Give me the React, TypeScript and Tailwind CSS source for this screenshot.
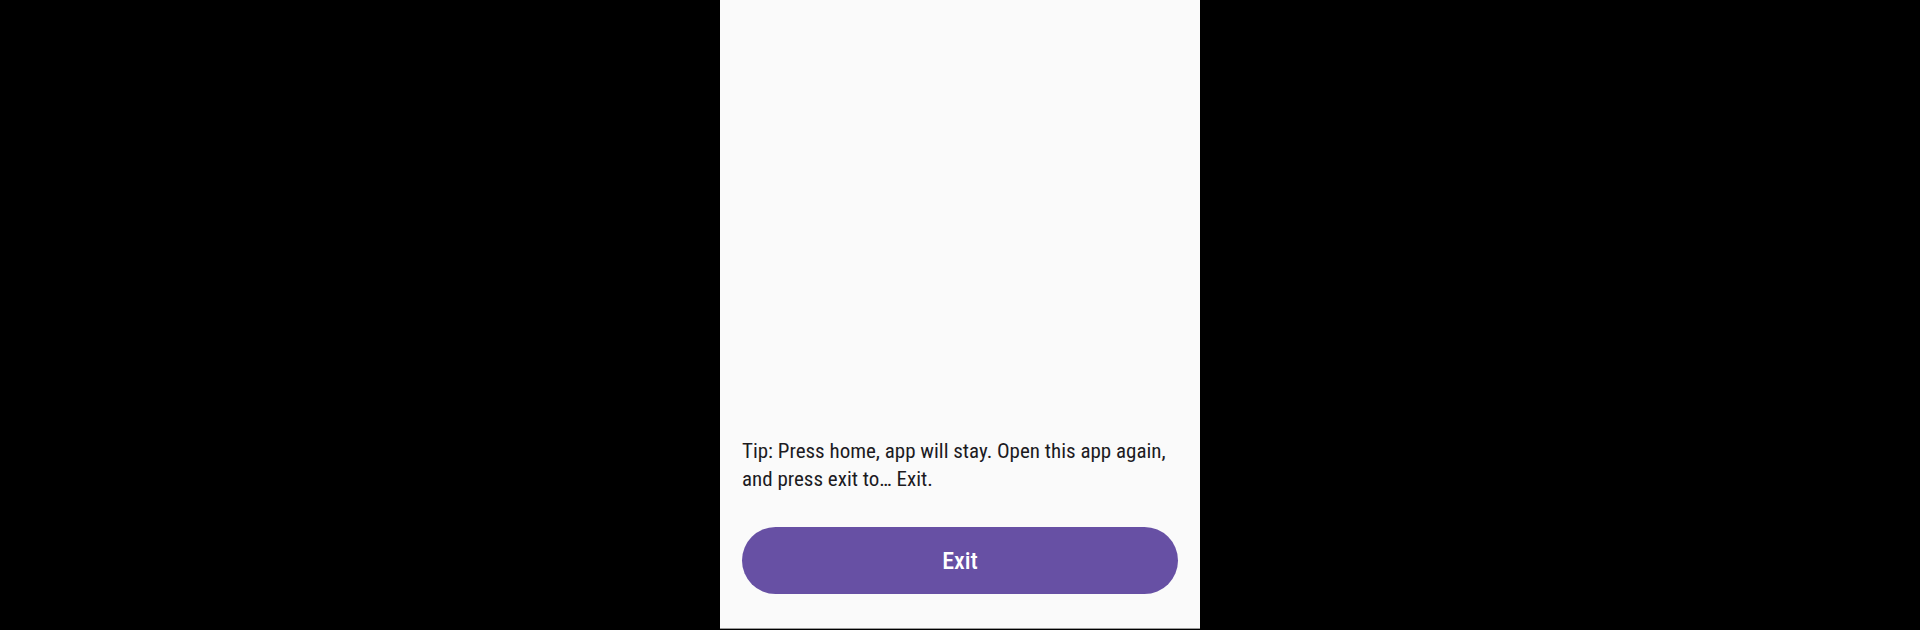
import React from "react";

export default function App() {
  return (
    <div className="w-[1920px] h-[630px] bg-black flex justify-center">
      <div className="w-[480px] h-[629px] bg-[#FAFAFA] border-b border-[#9a9a9a] flex flex-col justify-end px-[22px] pb-[34px] font-['Roboto_Condensed',Roboto,sans-serif]">
        <p className="text-[21px] leading-[28px] text-[#1C1B1F]">
          Tip: Press home, app will stay. Open this app again, and press exit to… Exit.
        </p>
        <button className="mt-[34px] h-[67px] w-full rounded-full bg-[#6750A4] text-white text-[24px] font-medium flex items-center justify-center">
          Exit
        </button>
      </div>
    </div>
  );
}
